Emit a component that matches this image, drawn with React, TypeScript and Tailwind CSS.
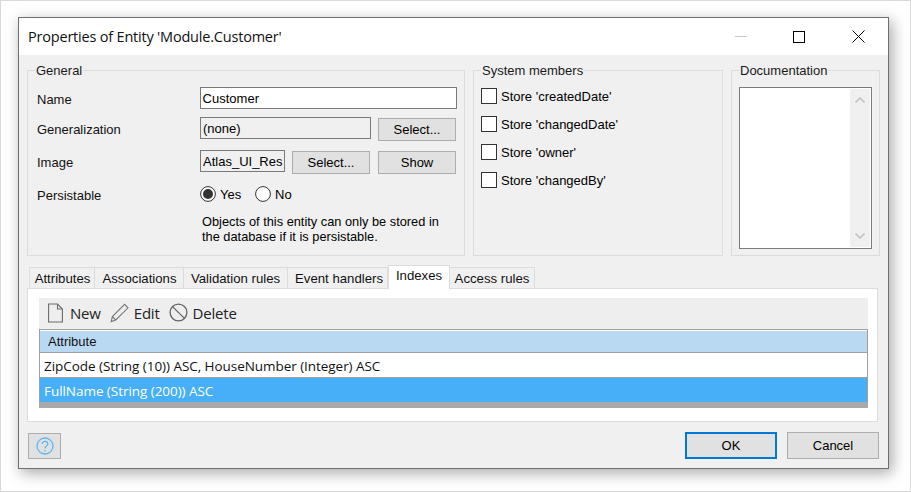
import { type ReactNode } from 'react';

const fontUi = "font-['Liberation_Sans',Arial,sans-serif]";

function Group({ title, className, children }: { title: string; className: string; children: ReactNode }) {
  return (
    <fieldset className={`border border-[#dcdcdc] h-[195px] min-w-0 ${className}`}>
      <legend className="ml-[7px] px-px text-[13px] leading-[18px] text-[#1a1a1a]">
        <span className="relative top-px">{title}</span>
      </legend>
      {children}
    </fieldset>
  );
}

function WinButton({ children, className }: { children: ReactNode; className: string }) {
  return (
    <button className={`bg-[#e1e1e1] border border-[#adadad] h-[23px] mt-px text-[13px] leading-[20px] text-black ${className}`}>
      {children}
    </button>
  );
}

function Tab({ label, className }: { label: string; className: string }) {
  return (
    <div className={`h-[21px] border border-b-0 border-[#dcdcdc] text-[13.2px] leading-[21px] text-center text-[#111] ${className}`}>
      {label}
    </div>
  );
}

function StoreCheck({ label }: { label: string }) {
  return (
    <div className="flex items-center h-[16px] mb-[12px]">
      <div className="w-[16px] h-[16px] bg-white border border-[#333]" />
      <span className="ml-[4px] pt-px text-[13px] leading-[16px] text-black">{label}</span>
    </div>
  );
}

function Radio({ checked }: { checked?: boolean }) {
  return (
    <svg width="16" height="16" viewBox="0 0 16 16" className="shrink-0">
      <circle cx="8" cy="8" r="7.4" fill="#fff" stroke="#333" strokeWidth="1" />
      {checked && <circle cx="8" cy="8" r="5" fill="#333" />}
    </svg>
  );
}

export default function App() {
  return (
    <div className={`w-[911px] h-[492px] bg-white border border-[#d9d9d9] pl-[17px] pt-[16px] ${fontUi} overflow-hidden`}>
      <div className="w-[871px] h-[452px] bg-[#f0f0f0] border border-[#6e6e6e] shadow-[3px_4px_14px_rgba(0,0,0,0.35)] flex flex-col">
        {/* title bar */}
        <div className="h-[37px] bg-white flex items-center pl-[9px] shrink-0">
          <span className="text-[14.5px] text-[#111] font-['Open_Sans',sans-serif] tracking-[-0.2px]">Properties of Entity 'Module.Customer'</span>
          <div className="ml-auto flex items-center">
            <div className="w-[12px] h-px bg-[#c8c8c8] mr-[46px]" />
            <div className="w-[12px] h-[12px] border border-black mr-[47px]" />
            <svg width="13" height="13" viewBox="0 0 13 13" className="mr-[23px]">
              <path d="M0.5 0.5 L12.5 12.5 M12.5 0.5 L0.5 12.5" stroke="#000" strokeWidth="1" fill="none" />
            </svg>
          </div>
        </div>

        {/* group boxes */}
        <div className="flex gap-[8px] pl-[8px] mt-[6px]">
          <Group title="General" className="w-[438px]">
            <div className="pl-[9px] pr-[7px] pt-[8px]">
              <div className="flex items-start h-[22px]">
                <span className="w-[163px] mt-[4px] text-[13px] leading-[18px] text-[#111]">Name</span>
                <div className="w-[258px] h-[22px] bg-white border border-[#7a7a7a] pl-[2px] text-[13px] leading-[21px] text-black">Customer</div>
              </div>
              <div className="flex items-start h-[24px] mt-[8px]">
                <span className="w-[163px] mt-[4px] text-[13px] leading-[18px] text-[#111]">Generalization</span>
                <div className="w-[171px] h-[22px] bg-[#f0f0f0] border border-[#7a7a7a] pl-[2px] text-[13px] leading-[21px] text-black">(none)</div>
                <WinButton className="w-[78px] ml-[7px]">Select...</WinButton>
              </div>
              <div className="flex items-start h-[24px] mt-[9px]">
                <span className="w-[163px] mt-[4px] text-[13px] leading-[18px] text-[#111]">Image</span>
                <div className="w-[85px] h-[22px] bg-[#f0f0f0] border border-[#7a7a7a] pl-[2px] text-[13px] leading-[21px] text-black whitespace-nowrap">Atlas_UI_Res</div>
                <WinButton className="w-[78px] ml-[7px]">Select...</WinButton>
                <WinButton className="w-[78px] ml-[8px]">Show</WinButton>
              </div>
              <div className="flex items-center h-[16px] mt-[12px]">
                <span className="w-[163px] pt-[3px] text-[13px] text-[#111]">Persistable</span>
                <Radio checked />
                <span className="ml-[4px] w-[35px] pt-[2px] text-[13px] text-black">Yes</span>
                <Radio />
                <span className="ml-[4px] pt-[2px] text-[13px] text-black">No</span>
              </div>
              <p className="ml-[165px] mt-[12px] text-[12.8px] leading-[15px] text-black">
                Objects of this entity can only be stored in<br />the database if it is persistable.
              </p>
            </div>
          </Group>

          <Group title="System members" className="w-[250px]">
            <div className="pl-[7px] pt-[9px]">
              <StoreCheck label="Store 'createdDate'" />
              <StoreCheck label="Store 'changedDate'" />
              <StoreCheck label="Store 'owner'" />
              <StoreCheck label="Store 'changedBy'" />
            </div>
          </Group>

          <Group title="Documentation" className="w-[149px]">
            <div className="ml-[7px] mt-[8px] w-[133px] h-[162px] bg-white border border-[#7a7a7a] flex justify-end p-px">
              <div className="w-[20px] h-full bg-[#f0f0f0] flex flex-col items-center justify-between py-[8px]">
                <svg width="10" height="6" viewBox="0 0 10 6"><path d="M0.5 5.5 L5 1 L9.5 5.5" stroke="#c4c4c4" strokeWidth="1.6" fill="none" /></svg>
                <svg width="10" height="6" viewBox="0 0 10 6"><path d="M0.5 0.5 L5 5 L9.5 0.5" stroke="#c4c4c4" strokeWidth="1.6" fill="none" /></svg>
              </div>
            </div>
          </Group>
        </div>

        {/* tabs */}
        <div className="flex items-end h-[24px] mt-[8px] pl-[10px] relative z-10">
          <Tab label="Attributes" className="w-[66px] pl-px" />
          <Tab label="Associations" className="w-[89px] border-l-0 pl-px" />
          <Tab label="Validation rules" className="w-[104px] border-l-0" />
          <Tab label="Event handlers" className="w-[100px] border-l-0 pl-[3px]" />
          <div className="w-[62px] h-[24px] bg-white border border-b-0 border-[#dcdcdc] text-[13.2px] leading-[20px] text-center text-[#111] -mb-px">Indexes</div>
          <Tab label="Access rules" className="w-[85px] border-l-0" />
        </div>

        {/* tab panel */}
        <div className="ml-[8px] w-[851px] h-[134px] bg-white border border-[#dcdcdc] pl-[11px] pt-[9px] shrink-0">
          <div className="w-[829px]">
            <div className="h-[31px] bg-[#eeeeee] flex items-center pl-[9px] pb-[2px] text-[15px] text-[#222] font-['Open_Sans',sans-serif]">
              <svg width="15" height="20" viewBox="0 0 15 20" fill="none" stroke="#6b6b6b" strokeWidth="1.1">
                <path d="M0.6 1 H9.5 L14.4 6 V19 H0.6 Z M9.5 1 V6 H14.4" />
              </svg>
              <span className="ml-[7px] pt-[2px] tracking-[-0.2px]">New</span>
              <svg width="19" height="20" viewBox="0 0 19 20" fill="none" stroke="#777" strokeWidth="1.1" className="ml-[9px]">
                <path d="M1.2 18.6 L2.4 13.6 L14.6 1.4 L18 4.8 L5.8 17 Z M2.4 13.6 L5.8 17" />
              </svg>
              <span className="ml-[5px] pt-[2px] tracking-[-0.2px]">Edit</span>
              <svg width="19" height="19" viewBox="0 0 19 19" fill="none" stroke="#666" strokeWidth="1.3" className="ml-[9px]">
                <circle cx="9.5" cy="9.5" r="8.4" />
                <path d="M3.6 3.6 L15.4 15.4" />
              </svg>
              <span className="ml-[5px] pt-[2px] tracking-[-0.2px]">Delete</span>
            </div>
            <div className="border-t border-x border-[#a0a0a0] bg-white">
              <div className="h-[22px] mt-px bg-[#b9d9f2] border-b border-[#a0a0a0] pl-[8px] text-[13px] leading-[21px] text-[#111]">Attribute</div>
              <div className="h-[25px] bg-white border-b border-[#a0a0a0] pl-[4px] text-[13.5px] leading-[27px] text-[#111] font-['Open_Sans',sans-serif] tracking-[-0.05px]">
                ZipCode (String (10)) ASC, HouseNumber (Integer) ASC
              </div>
              <div className="h-[24px] bg-[#47aff8] pl-[4px] text-[13.5px] leading-[26px] text-white font-['Open_Sans',sans-serif] tracking-[-0.05px]">
                FullName (String (200)) ASC
              </div>
            </div>
            <div className="h-[6px] bg-[#a9a9a9]" />
          </div>
        </div>

        {/* footer */}
        <div className="flex items-center pl-[9px] pr-[9px] mt-[10px]">
          <button className="w-[33px] h-[26px] bg-[#e1e1e1] border border-[#adadad] flex items-center justify-center">
            <svg width="18" height="18" viewBox="0 0 18 18" fill="none" stroke="#5cb8f5" strokeWidth="1.3">
              <circle cx="9" cy="9" r="8" />
              <path d="M6.2 7 C6.2 3.6 11.8 3.6 11.8 7 C11.8 9 9 9 9 11.4" />
              <path d="M9 13 V14.4" />
            </svg>
          </button>
          <button className="ml-auto w-[92px] h-[27px] bg-[#e1e1e1] border-2 border-[#0078d7] text-[13px] text-black">OK</button>
          <button className="ml-[10px] w-[92px] h-[27px] bg-[#e1e1e1] border border-[#adadad] text-[13px] text-black">Cancel</button>
        </div>
      </div>
    </div>
  );
}
